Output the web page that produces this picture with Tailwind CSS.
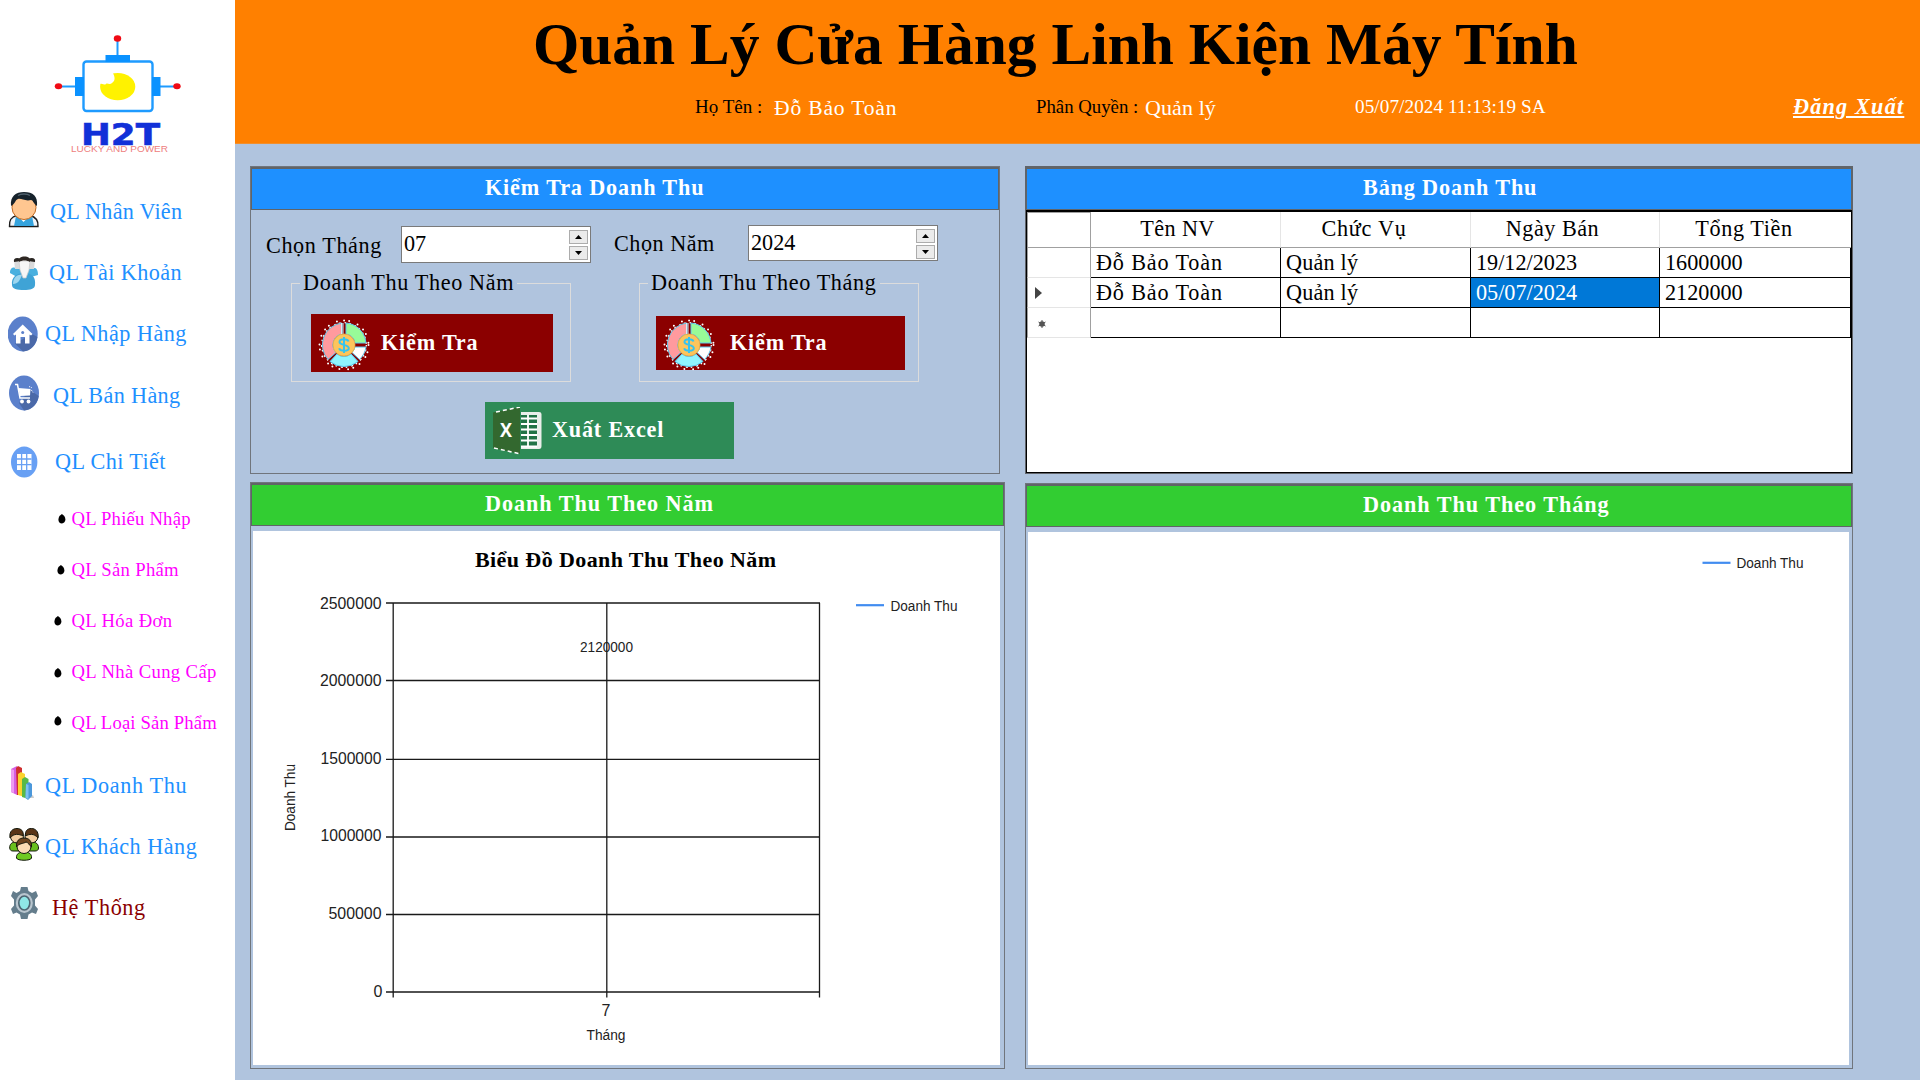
<!DOCTYPE html>
<html lang="vi">
<head>
<meta charset="utf-8">
<title>Quản Lý Cửa Hàng Linh Kiện Máy Tính</title>
<script src="https://cdn.jsdelivr.net/npm/@tailwindcss/browser@4"></script>
</head>
<body class="w-[1920px] h-[1080px] overflow-hidden flex bg-[#b0c4de] font-['Liberation_Serif',serif] text-[22.2px] leading-[26px] text-black whitespace-nowrap">

<!-- Shared symbols -->
<svg class="hidden">
  <symbol id="money" viewBox="-26 -26 52 52">
    <circle r="24.5" fill="none" stroke="#fff" stroke-width="2" stroke-linecap="round" stroke-dasharray="0 7.3 0 5.2 0 9"/>
    <circle r="22.3" fill="none" stroke="#fff" stroke-width="1.3" stroke-dasharray="1.5 3 2 4"/>
    <g stroke="#5cc8ee" stroke-width="1">
      <path d="M-2 -22A22 22 0 0 0 -16 14.500L-8 7.500A11 11 0 0 1 -2 -11Z" fill="#ff9a9e"/>
      <path d="M2 -22A22 22 0 0 1 22 -2L11 -2A11 11 0 0 0 2 -11Z" fill="#98fb98"/>
      <path d="M22 2A22 22 0 0 1 15.500 14.500L8 7.500A11 11 0 0 0 11 2Z" fill="#fff"/>
      <path d="M-14 16.500A22 22 0 0 0 14 16.500L7 9A11 11 0 0 1 -7 9Z" fill="#8ff5ff"/>
    </g>
    <path d="M-2.500 -22V-11M-1 -22V-11" stroke="#cfeffc" stroke-width="1"/>
    <circle r="11" fill="#fcc55c" stroke="#e8b04a" stroke-width=".8"/>
    <path d="M4.500 -3.500C3.500 -6.500 -4.500 -6.500 -4.500 -3C-4.500 .5 4.800 -.8 4.800 3.200C4.800 6.500 -4 6.500 -4.800 3.200M0 -8V8" fill="none" stroke="#35c3ef" stroke-width="2"/>
  </symbol>
</svg>

<!-- Sidebar -->
<aside class="w-[235px] h-full bg-white shrink-0 flex flex-col text-[#1e90ff]">
  <div class="h-[181px] shrink-0">
    <svg width="235" height="181" viewBox="0 0 235 181">
      <g stroke="#1e9bff" fill="none">
        <path d="M117.500 40V58M62 86.500H76M160 86.500H174" stroke-width="2"/>
        <rect x="83.500" y="61.500" width="69" height="49.500" rx="3" stroke-width="2.400" fill="#fff"/>
      </g>
      <path d="M105.500 55H130V62H105.500ZM75 77H84V96H75ZM152 77H160.500V96H152Z" fill="#0a92ff"/>
      <g fill="#f00a14"><ellipse cx="117.500" cy="38.500" rx="3.700" ry="3.200"/><ellipse cx="58.500" cy="86.300" rx="3.700" ry="3"/><ellipse cx="177" cy="86.300" rx="3.700" ry="3"/></g>
      <ellipse cx="117.700" cy="86.700" rx="17.600" ry="13.600" fill="#fff200"/>
      <path d="M98 70H111C114.500 75 116.500 80 112 83C109 85.500 107.500 82.500 106 84C104 85.500 101 83 99 84Z" fill="#fff"/>
      <text x="81" y="145" textLength="79" lengthAdjust="spacingAndGlyphs" font-family="DejaVu Sans" font-weight="bold" font-size="30.500" fill="#1130d8" stroke="#1130d8" stroke-width=".6">H2T</text>
      <text x="71" y="152.300" textLength="97" lengthAdjust="spacingAndGlyphs" font-family="Liberation Sans" font-size="8.800" fill="#ee8080">LUCKY AND POWER</text>
    </svg>
  </div>

  <nav class="flex flex-col">
    <a class="h-[61px] flex items-center pl-2">
      <svg class="w-[42px] h-9 shrink-0 -mt-1" viewBox="0 0 42 36">
        <path d="M1.500 34.500C1 28 3 25 9 23.500H22C28 25 30.500 28 30 34.500Z" fill="#eef4fa" stroke="#1c1c1c" stroke-width="1.400"/>
        <path d="M8 24L16 28L24 24L26 34H6Z" fill="#35a3dd"/>
        <path d="M10 24L15.500 30L21.500 24Z" fill="#fff"/>
        <ellipse cx="16" cy="15.500" rx="12" ry="12" fill="#ffc690" stroke="#c06a22" stroke-width="1"/>
        <path d="M3 14C2 4 8 0 16 0C25 0 30 4 29 14C25 11 25 8 23 8C17 9.500 13 6 10 7C7 8 8 11 3 14Z" fill="#16222b"/>
        <path d="M10 3.500C13 1.500 19 1.500 22 3.500" stroke="#51626e" fill="none" stroke-width="1.500"/>
      </svg><span class="tracking-[0.25px]">QL Nhân Viên</span></a>
    <a class="h-[61px] flex items-center pl-2">
      <svg class="w-[41px] h-9 shrink-0" viewBox="0 0 41 36">
        <path d="M2 18C2 12 6 12 8 13L24 13C29 12 30 16 30 20L23 22H9Z" fill="#49b0df"/>
        <path d="M4 30C3 22 9 18 16 18C24 18 28 22 27 30C27 34 22 35 16 35C9 35 4 34 4 30Z" fill="#3fa3d6"/>
        <path d="M5 29C5 23 9 19 14 20C12 25 10 29 5 29Z" fill="#9dd6ef"/>
        <path d="M6 5H13V14H7ZM20 5H27L26 14H20Z" fill="#d9dadb"/>
        <path d="M6 7C5 3 9 2 13 4V6ZM27 7C28 3 24 2 20 4V6Z" fill="#2a2623"/>
        <path d="M11 6H22L21 15L18 23H15L12 15Z" fill="#f6f6f6" stroke="#c9c9c9" stroke-width=".7"/>
        <path d="M11 7C10 3 13 1.500 16.500 1.500C20 1.500 23 3 22 7C19 5 14 5 11 7Z" fill="#2e2723"/>
      </svg><span class="tracking-[0.4px]">QL Tài Khoản</span></a>
    <a class="h-[61px] flex items-center pl-2">
      <svg class="w-[37px] h-9 shrink-0" viewBox="0 0 37 36">
        <ellipse cx="14.700" cy="18" rx="15" ry="17.500" fill="#5b80cb"/>
        <path d="M24 18L29.500 21C28 29 23 35 15 35.500L7 27.500Z" fill="#4a69a8"/>
        <path d="M14.700 8.500L24.500 18L23 19.500L21.500 18.500V27.500H17V21H12.500V27.500H8V18.500L6.500 19.500L5 18Z" fill="#fff"/>
        <circle cx="14.700" cy="16.500" r="1.500" fill="#5b80cb"/>
      </svg><span class="tracking-[0.5px]">QL Nhập Hàng</span></a>
    <a class="h-[61px] flex items-center pl-[9px]">
      <svg class="w-11 h-9 shrink-0 -mt-1" viewBox="0 0 44 36">
        <ellipse cx="15" cy="18" rx="15" ry="17.500" fill="#5b80cb"/>
        <path d="M21 15L29.800 21C28.500 29 23 35 15 35.500L10 28Z" fill="#4a69a8"/>
        <path d="M6 9.500H8.500L11 23H21" fill="none" stroke="#fff" stroke-width="1.500"/>
        <path d="M9.500 13L21.500 14L21 20.500L11 21Z" fill="#fff"/>
        <circle cx="13" cy="26.500" r="1.900" fill="#fff"/><circle cx="19.500" cy="26.500" r="1.900" fill="#fff"/>
        <path d="M20 11.500L23.500 13M24 17.500L22 14.500" stroke="#fff" stroke-dasharray="1 1"/>
      </svg><span class="pt-0.5 tracking-[0.35px]">QL Bán Hàng</span></a>
    <a class="h-[70px] flex items-center pl-[11px] pt-[4px]">
      <svg class="w-11 h-8 shrink-0" viewBox="0 0 44 32">
        <ellipse cx="13.200" cy="16" rx="13.200" ry="15.500" fill="#68a0f4"/>
        <path d="M6 8H20.500V24H6Z" fill="#fff"/>
        <path d="M10.600 8V24M15.700 8V24M6 13H20.500M6 18.700H20.500" stroke="#68a0f4" stroke-width="1.300"/>
      </svg><span class="tracking-[0.4px]">QL Chi Tiết</span></a>

    <div class="flex flex-col text-[18.7px] text-[#ff00ff] -mt-0.5">
      <a class="h-[51px] flex items-center pl-[58px]"><svg class="w-[13.5px] h-3 shrink-0" viewBox="0 0 13 12"><path d="M3.700 1L6 3C8.500 7 6.500 10.500 3.700 10.500C.5 10.500 -1 7 1.200 3Z"/></svg><span class="tracking-[0.2px]">QL Phiếu Nhập</span></a>
      <a class="h-[51px] flex items-center pl-[57px]"><svg class="w-[14.5px] h-3 shrink-0" viewBox="0 0 14 12"><path d="M3.700 1L6 3C8.500 7 6.500 10.500 3.700 10.500C.5 10.500 -1 7 1.200 3Z"/></svg><span class="tracking-[0.3px]">QL Sản Phẩm</span></a>
      <a class="h-[51px] flex items-center pl-[54px]"><svg class="w-[17.5px] h-3 shrink-0" viewBox="0 0 17 12"><path d="M3.700 1L6 3C8.500 7 6.500 10.500 3.700 10.500C.5 10.500 -1 7 1.200 3Z"/></svg><span class="tracking-[0.35px]">QL Hóa Đơn</span></a>
      <a class="h-[51px] flex items-center pl-[54px]"><svg class="w-[17.5px] h-3 shrink-0 mt-0.5" viewBox="0 0 17 12"><path d="M3.700 1L6 3C8.500 7 6.500 10.500 3.700 10.500C.5 10.500 -1 7 1.200 3Z"/></svg><span class="tracking-[0.35px]">QL Nhà Cung Cấp</span></a>
      <a class="h-[51px] flex items-center pl-[54px]"><svg class="w-[17.5px] h-3 shrink-0 -mt-1" viewBox="0 0 17 12"><path d="M3.700 1L6 3C8.500 7 6.500 10.500 3.700 10.500C.5 10.500 -1 7 1.200 3Z"/></svg><span class="pt-px tracking-[0.15px]">QL Loại Sản Phẩm</span></a>
    </div>

    <a class="h-[61px] flex items-center pl-[10px] mt-[7px]">
      <svg class="w-[35px] h-9 shrink-0 -mt-1.5" viewBox="0 0 35 36">
        <path d="M18 33L24 33L23 30Z" fill="#ccc"/>
        <path d="M1 4L7 1V30L1 27Z" fill="#d65fe0"/><path d="M1 4L4 5V28L1 27Z" fill="#ee9cf2"/>
        <path d="M6 3L8 1L12 3V30L7 30Z" fill="#cf2f2f"/>
        <path d="M8 9L11 7L15 9V32L8 30Z" fill="#fbd32c"/>
        <path d="M12 14L15 12L18.500 14V34L12 32Z" fill="#58b947"/>
        <path d="M16 19L19 17L22 19V31L18 35L15.500 33Z" fill="#4b98db"/><path d="M16 19L18.500 20V34L15.500 33Z" fill="#7cc0f2"/>
      </svg><span class="tracking-[0.65px]">QL Doanh Thu</span></a>
    <a class="h-[61px] flex items-center pl-[9px]">
      <svg class="w-9 h-9 shrink-0 -mt-1" viewBox="0 0 36 36">
        <g stroke="#14180c" stroke-width="1">
          <path d="M.7 21C.5 17 3 15 7 15C12 15 14 18 13 24H4C2 24 1 23 .7 21ZM29.500 21C29.500 17 27 15 23 15C18 15 16 18 17 24H26C28 24 29.500 23 29.500 21Z" fill="#69c01f"/>
          <circle cx="8" cy="9.500" r="6.500" fill="#f3cda0"/><circle cx="22.500" cy="9.500" r="6.500" fill="#f3cda0"/>
          <path d="M1 11C0 4 4 1.500 8 1.500C12 1.500 15 4 14 9C10 7 5 6 1 11ZM29 11C30 4 26 1.500 22.500 1.500C18 1.500 16 4 16.500 9C20 7 25 6 29 11Z" fill="#5a3517"/>
          <path d="M7.500 31C7 27 10 25 15 25C20 25 23 27 22.500 31C22 34 8 34 7.500 31Z" fill="#6fca22"/>
          <circle cx="15" cy="19.500" r="7" fill="#fbdcb4"/>
          <path d="M7.500 20C7 14 10 11 15 11C20 11 23 14 22.500 20C20 18 19 15 17 15C14 17 10 16 7.500 20Z" fill="#6e441f"/>
        </g>
      </svg><span class="tracking-[0.5px]">QL Khách Hàng</span></a>
    <a class="h-[61px] flex items-center pl-[11px] text-[#8b0000]">
      <svg class="w-[41px] h-9 shrink-0 -mt-2.5" viewBox="0 0 41 36">
        <path d="M10 2H16.500L17.500 6L21 8L25 6L27 11L24 14.500V20.500L27 24L25 29L21 27.500L17.500 29.500L16.500 34H10L9 29.500L5.500 27.500L2 29L0 24L3 20.500V14.500L0 11L2 6L5.500 8L9 6Z" fill="#647d8c"/>
        <ellipse cx="13.300" cy="18" rx="8.500" ry="10" fill="#b9c6cf"/>
        <ellipse cx="13.300" cy="18" rx="5.500" ry="7" fill="#8fe6e6" stroke="#4d6471" stroke-width="1.600"/>
      </svg><span class="tracking-[0.6px]">Hệ Thống</span></a>
  </nav>
</aside>

<div class="flex-1 flex flex-col">
  <!-- Header -->
  <header class="h-36 shrink-0 bg-[#ff8000] border-b border-[#e8994a]/60">
    <h1 class="h-[85px] pl-[298px] font-bold text-[59.5px] leading-[89px]">Quản Lý Cửa Hàng Linh Kiện Máy Tính</h1>
    <div class="flex items-center h-11 text-white text-[19.2px] pl-[460px]">
      <span class="w-[79px] text-[19px] text-black">Họ Tên :</span>
      <span class="w-[262px] text-[21.6px] tracking-[0.8px] pt-px">Đỗ Bảo Toàn</span>
      <span class="w-[109px] text-[18.8px] text-black">Phân Quyền :</span>
      <span class="w-[210px] text-[22px] tracking-[0.1px] pt-px">Quản lý</span>
      <span class="w-[438px] tracking-[0.08px]">05/07/2024 11:13:19 SA</span>
      <a class="text-[22.2px] tracking-[1.2px] font-bold italic underline decoration-2 underline-offset-2">Đăng Xuất</a>
    </div>
  </header>

  <main class="flex flex-1 pl-[15px] pt-[22px] gap-5">
    <div class="w-[755px] flex flex-col gap-2">
      <!-- Filter panel -->
      <section class="w-[750px] h-[308px] border border-[#70757c]">
        <h2 class="h-[43px] bg-[#1e90ff] border-t-2 border-b border-x border-[#606468] pl-[233px] leading-[37px] font-bold tracking-[0.85px] text-white">Kiểm Tra Doanh Thu</h2>
        <div class="flex pl-[15px] pt-[15px]">
          <label class="w-[135px] leading-[41px] tracking-[0.6px]">Chọn Tháng</label>
          <div class="w-[190px] h-[37px] mt-px border border-[#7a7a7a] bg-white flex justify-between pl-0.5 pr-[2px] leading-[34px]">
            <span>07</span>
            <div class="flex flex-col gap-0.5 pt-[3px]">
              <button class="w-[19px] h-3.5 border border-[#acacac] bg-[#ebebeb] flex items-center justify-center"><svg width="7" height="4" viewBox="0 0 7 4"><path d="M0 4L3.500 0L7 4Z"/></svg></button>
              <button class="w-[19px] h-3.5 border border-[#acacac] bg-[#ebebeb] flex items-center justify-center"><svg width="7" height="4" viewBox="0 0 7 4"><path d="M0 0L3.500 4L7 0Z"/></svg></button>
            </div>
          </div>
          <label class="w-[134px] ml-[23px] leading-[38px] tracking-[0.5px]">Chọn Năm</label>
          <div class="w-[190px] h-9 border border-[#7a7a7a] bg-white flex justify-between pl-0.5 pr-[2px] leading-[34px]">
            <span>2024</span>
            <div class="flex flex-col gap-0.5 pt-[3px]">
              <button class="w-[19px] h-3.5 border border-[#acacac] bg-[#ebebeb] flex items-center justify-center"><svg width="7" height="4" viewBox="0 0 7 4"><path d="M0 4L3.500 0L7 4Z"/></svg></button>
              <button class="w-[19px] h-3.5 border border-[#acacac] bg-[#ebebeb] flex items-center justify-center"><svg width="7" height="4" viewBox="0 0 7 4"><path d="M0 0L3.500 4L7 0Z"/></svg></button>
            </div>
          </div>
        </div>
        <div class="flex pl-10 pt-[4px] gap-[68px]">
          <fieldset class="w-[280px] h-[112px] border border-[#dcdcdc] pl-2">
            <legend class="px-[3px] tracking-[0.65px]">Doanh Thu Theo Năm</legend>
            <button class="ml-[11px] mt-[18px] w-[242px] h-[58px] bg-[#8b0000] flex items-center pl-[7px] text-white font-bold tracking-[0.8px]">
              <svg class="size-[52px] mr-[11px] mt-[3px]"><use href="#money"/></svg>Kiểm Tra</button>
          </fieldset>
          <fieldset class="w-[280px] h-[112px] border border-[#dcdcdc] pl-2">
            <legend class="px-[3px] tracking-[0.65px]">Doanh Thu Theo Tháng</legend>
            <button class="ml-2 mt-5 w-[249px] h-[54px] bg-[#8b0000] flex items-center pl-[7px] text-white font-bold tracking-[0.8px]">
              <svg class="size-[52px] mr-[15px] mt-[3px]"><use href="#money"/></svg>Kiểm Tra</button>
          </fieldset>
        </div>
        <button class="ml-[234px] mt-5 w-[249px] h-[57px] bg-[#2e8b57] flex items-center pl-2 text-white font-bold tracking-[0.8px]">
          <svg class="w-[50px] h-12 mr-[9px]" viewBox="0 0 50 48">
            <path d="M28 5H46Q48.500 5 48.500 7V39Q48.500 42 46 42H28Z" fill="#e9eeea"/>
            <path d="M28 8H44V40H28Z" fill="#217346"/>
            <path d="M28 11.500H44M28 17H44M28 22.500H44M28 28H44M28 33.500H44M35 8V39M28 39.500H44" stroke="#fff" stroke-width="1.800"/>
            <path d="M0 5.500L27 0V47L0 41Z" fill="#33682f"/>
            <path d="M3 5L27 0M1 41L28 47" stroke="#fff" stroke-width="1.500" stroke-dasharray="4 3"/>
            <text x="7" y="30" font-family="Open Sans" font-weight="bold" font-size="20" textLength="12" lengthAdjust="spacingAndGlyphs" fill="#fff" letter-spacing="0">X</text>
          </svg><span class="-mt-0.5">Xuất Excel</span></button>
      </section>

      <!-- Yearly chart -->
      <section class="w-[755px] h-[587px] border border-[#70757c]">
        <h2 class="h-[43px] bg-[#32cd32] border-t-2 border-b border-x border-[#606468] pl-[233px] leading-[37px] font-bold tracking-[0.95px] text-white">Doanh Thu Theo Năm</h2>
        <svg class="mt-[5px] ml-0.5 bg-white" width="747" height="534" viewBox="253 531 747 534">
          <text x="475" y="567" textLength="301" font-weight="bold" font-size="22">Biểu Đồ Doanh Thu Theo Năm</text>
          <g stroke="#1a1a1a" stroke-width="1.300" fill="none">
            <path d="M386 603H820M386 680.500H820M386 759.300H820M386 837H820M386 914.500H820M386 992H820"/>
            <path d="M393.200 603V997.500M606.800 603V997.500M819.500 603V997.500"/>
          </g>
          <g font-family="Liberation Sans" font-size="16" fill="#222">
            <text x="320" y="608.500" textLength="61.500" lengthAdjust="spacingAndGlyphs">2500000</text>
            <text x="320" y="686" textLength="61.500" lengthAdjust="spacingAndGlyphs">2000000</text>
            <text x="320.500" y="763.700" textLength="61" lengthAdjust="spacingAndGlyphs">1500000</text>
            <text x="320.500" y="841.300" textLength="61" lengthAdjust="spacingAndGlyphs">1000000</text>
            <text x="328.500" y="919" textLength="53" lengthAdjust="spacingAndGlyphs">500000</text>
            <text x="373.500" y="997">0</text>
            <text x="601.500" y="1016">7</text>
            <g font-size="15.500">
              <text x="580" y="652.300" textLength="53" lengthAdjust="spacingAndGlyphs">2120000</text>
              <text x="586.500" y="1040" textLength="39" lengthAdjust="spacingAndGlyphs">Tháng</text>
              <text x="890.500" y="611" textLength="67" lengthAdjust="spacingAndGlyphs">Doanh Thu</text>
              <text transform="translate(295 831) rotate(-90)" textLength="67" lengthAdjust="spacingAndGlyphs">Doanh Thu</text>
            </g>
          </g>
          <path d="M856 605.200H884" stroke="#418cf0" stroke-width="2.200"/>
        </svg>
      </section>
    </div>

    <div class="w-[828px] flex flex-col gap-[9px]">
      <!-- Revenue table -->
      <section class="h-[308px] border border-[#60646a]">
        <h2 class="h-[43px] bg-[#1e90ff] border-t-2 border-b border-x border-[#606468] pl-[336px] leading-[37px] font-bold tracking-[0.85px] text-white">Bảng Doanh Thu</h2>
        <div class="h-[263px] border border-black border-t-2 bg-white">
          <div class="grid grid-cols-[64px_190px_190px_189px_191px] grid-rows-[36px_30px_30px_30px] leading-[29px]">
            <div class="border-r border-b border-[#a0a0a0] border-t border-l"></div>
            <div class="border-b border-b-[#a0a0a0] border-r border-r-[#e5e5e5] text-center pr-4 leading-[33px] tracking-[0.4px]">Tên NV</div>
            <div class="border-b border-b-[#a0a0a0] border-r border-r-[#e5e5e5] text-center pr-[23px] leading-[33px] tracking-[0.7px]">Chức Vụ</div>
            <div class="border-b border-b-[#a0a0a0] border-r border-r-[#e5e5e5] text-center pr-[25px] leading-[33px] tracking-[0.5px]">Ngày Bán</div>
            <div class="border-b border-b-[#a0a0a0] text-center pr-[23px] leading-[33px] tracking-[0.6px]">Tổng Tiền</div>

            <div class="border-r border-r-[#a0a0a0] border-b border-b-[#e5e5e5] border-l border-l-[#a0a0a0]"></div>
            <div class="border-r border-b border-black pl-[5px] tracking-[0.85px]">Đỗ Bảo Toàn</div>
            <div class="border-r border-b border-black pl-[5px] tracking-[0.2px]">Quản lý</div>
            <div class="border-r border-b border-black pl-[5px]">19/12/2023</div>
            <div class="border-r border-b border-black pl-[5px]">1600000</div>

            <div class="border-r border-r-[#a0a0a0] border-b border-b-[#e5e5e5] border-l border-l-[#a0a0a0] flex items-center pl-[7px]"><svg width="7" height="12" viewBox="0 0 7 12"><path d="M0 0L7 6L0 12Z" fill="#444"/></svg></div>
            <div class="border-r border-b border-black pl-[5px] tracking-[0.85px]">Đỗ Bảo Toàn</div>
            <div class="border-r border-b border-black pl-[5px] tracking-[0.2px]">Quản lý</div>
            <div class="border-r border-b border-black pl-[5px] bg-[#0078d7] text-white">05/07/2024</div>
            <div class="border-r border-b border-black pl-[5px]">2120000</div>

            <div class="border-r border-r-[#a0a0a0] border-b border-b-[#e5e5e5] border-l border-l-[#a0a0a0] flex items-center pl-[10px] pt-0.5"><svg width="8" height="8" viewBox="0 0 8 8"><circle cx="4" cy="4" r="2.800" fill="#555"/><path d="M4 0V8M.5 2L7.500 6M7.500 2L.5 6" stroke="#555"/></svg></div>
            <div class="border-r border-b border-black"></div>
            <div class="border-r border-b border-black"></div>
            <div class="border-r border-b border-black"></div>
            <div class="border-r border-b border-black"></div>
          </div>
        </div>
      </section>

      <!-- Monthly chart -->
      <section class="h-[586px] border border-[#70757c]">
        <h2 class="h-[43px] bg-[#32cd32] border-t-2 border-b border-x border-[#606468] pl-[336px] leading-[38px] font-bold tracking-[0.95px] text-white">Doanh Thu Theo Tháng</h2>
        <svg class="mt-[5px] ml-0.5 bg-white" width="821" height="533" viewBox="1028 532 821 533">
          <path d="M1702.500 562.800H1730.500" stroke="#418cf0" stroke-width="2.200"/>
          <text x="1736.500" y="568.200" textLength="67" lengthAdjust="spacingAndGlyphs" font-family="Liberation Sans" font-size="15.500" fill="#222">Doanh Thu</text>
        </svg>
      </section>
    </div>
  </main>
</div>
</body>
</html>
